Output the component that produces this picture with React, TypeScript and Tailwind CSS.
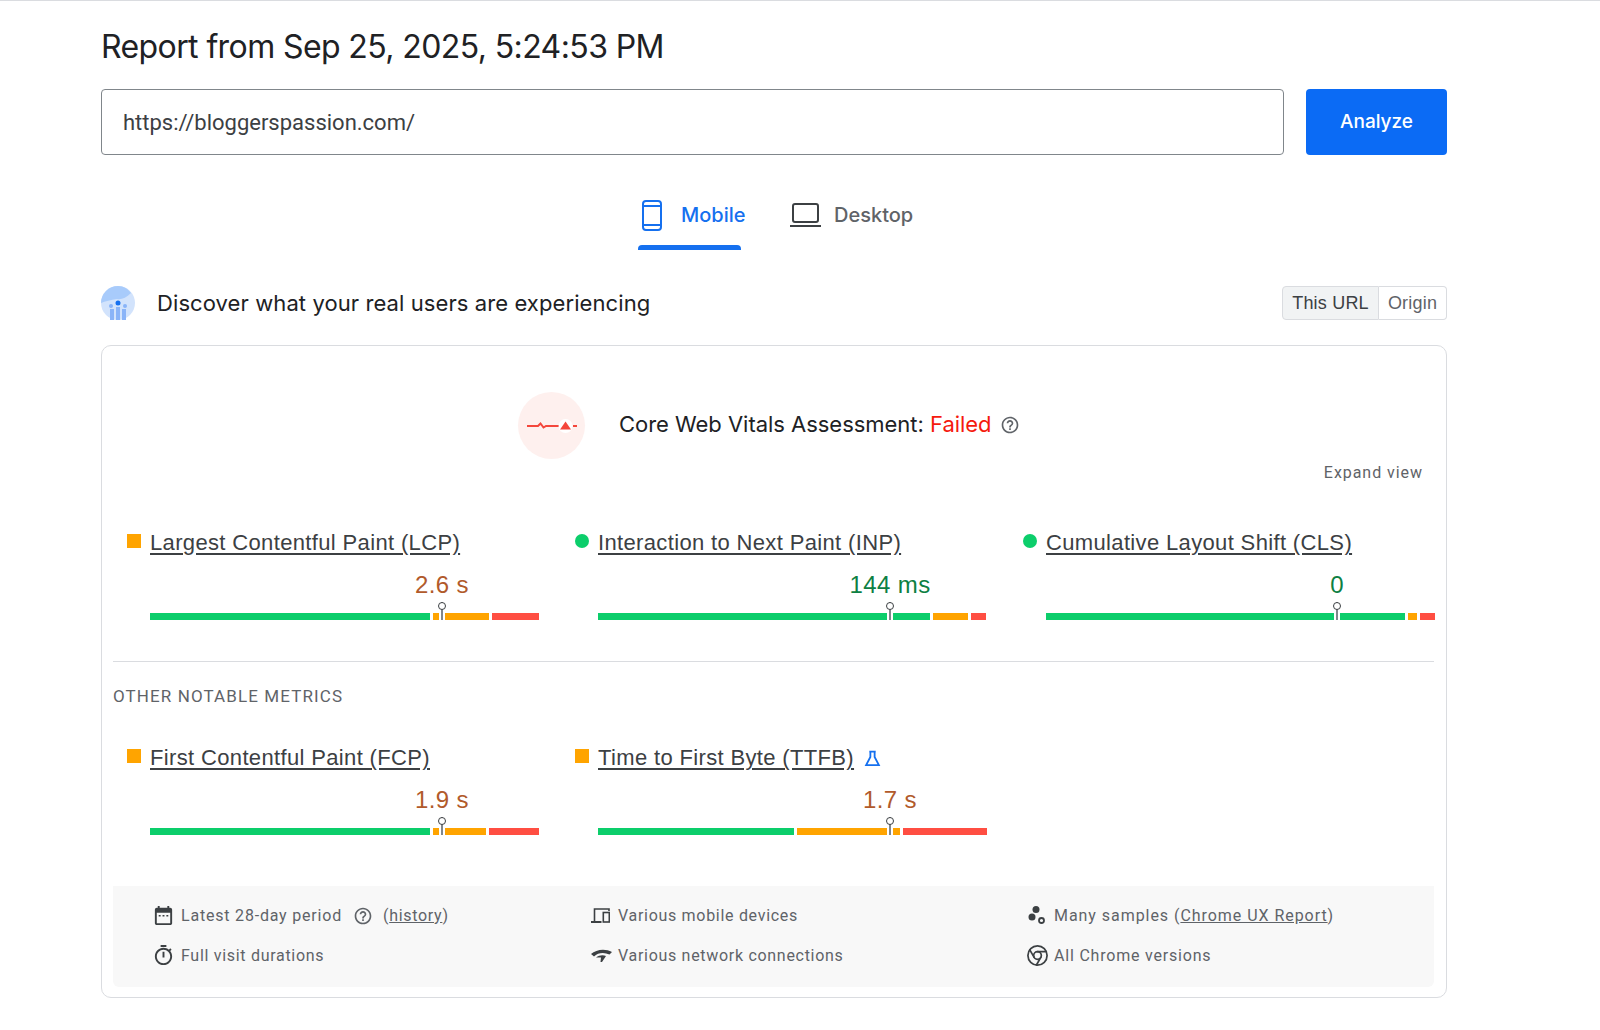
import React from 'react';
import { Chrome } from 'lucide-react';

type Segment = { color: string; width: number };

interface MetricData {
  label: string;
  value: string;
  valueClass: string;
  status: 'average' | 'good';
  marker: number;
  segments: Segment[];
  lab?: boolean;
}

const GREEN = '#0cce6b';
const ORANGE = '#ffa400';
const RED = '#ff4e42';

const coreMetrics: MetricData[] = [
  {
    label: 'Largest Contentful Paint (LCP)',
    value: '2.6 s',
    valueClass: 'text-[#b15a2b]',
    status: 'average',
    marker: 292,
    segments: [
      { color: GREEN, width: 280 },
      { color: ORANGE, width: 56 },
      { color: RED, width: 47 },
    ],
  },
  {
    label: 'Interaction to Next Paint (INP)',
    value: '144 ms',
    valueClass: 'text-[#0d8043]',
    status: 'good',
    marker: 292,
    segments: [
      { color: GREEN, width: 332 },
      { color: ORANGE, width: 35 },
      { color: RED, width: 15 },
    ],
  },
  {
    label: 'Cumulative Layout Shift (CLS)',
    value: '0',
    valueClass: 'text-[#0d8043]',
    status: 'good',
    marker: 291,
    segments: [
      { color: GREEN, width: 360 },
      { color: ORANGE, width: 9 },
      { color: RED, width: 15 },
    ],
  },
];

const otherMetrics: MetricData[] = [
  {
    label: 'First Contentful Paint (FCP)',
    value: '1.9 s',
    valueClass: 'text-[#b15a2b]',
    status: 'average',
    marker: 292,
    segments: [
      { color: GREEN, width: 280 },
      { color: ORANGE, width: 53 },
      { color: RED, width: 50 },
    ],
  },
  {
    label: 'Time to First Byte (TTFB)',
    value: '1.7 s',
    valueClass: 'text-[#b15a2b]',
    status: 'average',
    marker: 292,
    lab: true,
    segments: [
      { color: GREEN, width: 196 },
      { color: ORANGE, width: 103 },
      { color: RED, width: 84 },
    ],
  },
];

function HelpIcon({ className }: { className: string }) {
  return (
    <svg viewBox="0 0 24 24" className={className} fill="currentColor">
      <path d="M11 18h2v-2h-2v2zm1-16C6.48 2 2 6.48 2 12s4.48 10 10 10 10-4.48 10-10S17.52 2 12 2zm0 18c-4.41 0-8-3.59-8-8s3.59-8 8-8 8 3.59 8 8-3.59 8-8 8zm0-14c-2.21 0-4 1.79-4 4h2c0-1.1.9-2 2-2s2 .9 2 2c0 2-3 1.75-3 5h2c0-2.25 3-2.5 3-5 0-2.21-1.79-4-4-4z" />
    </svg>
  );
}

function Metric({ metric }: { metric: MetricData }) {
  return (
    <div className="w-[448px] shrink-0 pl-[14px]">
      <div className="flex h-[24px] items-center">
        {metric.status === 'average' ? (
          <span className="h-[14px] w-[14px] -translate-y-[2px] bg-[#ffa400]" />
        ) : (
          <span className="h-[14px] w-[14px] -translate-y-[2px] rounded-full bg-[#0cce6b]" />
        )}
        <a className="ml-[9px] font-['Liberation_Sans',sans-serif] text-[22px] leading-[24px] tracking-[0.35px] text-[#3c4043] underline underline-offset-3">
          {metric.label}
        </a>
        {metric.lab && (
          <svg viewBox="0 0 16 16" className="ml-[10px] h-[17px] w-[17px] text-[#1570ef]" fill="none" stroke="currentColor" strokeWidth="1.7">
            <path d="M5 1.500h6M6 1.500v5L2 14.200h12L10 6.500v-5" />
          </svg>
        )}
      </div>
      <div className="relative ml-[23px] mt-[16px] h-[49px] w-[389px]">
        <div
          className={`absolute top-0 -translate-x-1/2 whitespace-nowrap font-['Liberation_Sans',sans-serif] text-[24px] leading-[28px] tracking-[0.4px] ${metric.valueClass}`}
          style={{ left: metric.marker }}
        >
          {metric.value}
        </div>
        <div className="absolute bottom-0 left-0 right-0 flex h-[7px] gap-[3px]">
          {metric.segments.map((s, i) => (
            <div key={i} className="h-full" style={{ width: s.width, backgroundColor: s.color }} />
          ))}
        </div>
        <div
          className="absolute bottom-0 flex h-[18px] w-[8px] -translate-x-1/2 flex-col items-center"
          style={{ left: metric.marker }}
        >
          <span className="w-[2px] flex-1 bg-[#80868b] outline outline-2 outline-white" />
          <span className="absolute left-0 top-0 h-[8px] w-[8px] rounded-full border border-[#3c4043] bg-white" />
        </div>
      </div>
    </div>
  );
}

function InfoRow({ icon, children }: { icon: React.ReactNode; children: React.ReactNode }) {
  return (
    <div className="flex h-[40px] items-center font-['Roboto',sans-serif] text-[16px] tracking-[0.7px] text-[#5f6368]">
      <span className="flex w-[29px] -translate-y-[1px] text-[#3c4043]">{icon}</span>
      <span className="flex items-center whitespace-pre">{children}</span>
    </div>
  );
}

export default function App() {
  return (
    <div className="min-h-[1030px] border-t border-[#dadce0] bg-white px-[101px] text-[#202124]">
      <h1 className="pt-[26px] font-['Inter',sans-serif] text-[32px] leading-[40px] tracking-[-0.6px]">
        Report from Sep 25, 2025, 5:24:53 PM
      </h1>

      <div className="mt-[22px] flex w-[1346px] gap-[22px]">
        <div className="flex h-[66px] flex-1 items-center rounded border border-[#80868b] px-[21px] font-['Roboto',sans-serif] text-[22px] text-[#3c4043]">
          https://bloggerspassion.com/
        </div>
        <button className="h-[66px] w-[141px] rounded bg-[#0b6bf5] font-['Inter',sans-serif] text-[19px] font-medium text-white">
          Analyze
        </button>
      </div>

      <div className="ml-[537px] mt-[26px] flex gap-[49px]">
        <div className="flex h-[69px] w-[103px] flex-col pt-[14px]">
          <div className="flex h-[40px] items-center gap-[19px] whitespace-nowrap pl-[4px] font-['Inter',sans-serif] text-[20px] font-medium text-[#1570ef]">
            <svg viewBox="0 0 20 31" className="h-[31px] w-[20px] shrink-0" fill="none" stroke="currentColor" strokeWidth="2">
              <rect x="1" y="1" width="18" height="29" rx="3" />
              <path d="M1 6h18M1 25h18" />
            </svg>
            Mobile
          </div>
          <span className="mt-auto h-[5px] w-full rounded-t-[4px] bg-[#1570ef]" />
        </div>
        <div className="flex h-[69px] flex-col pt-[14px]">
          <div className="flex h-[40px] items-center gap-[13px] font-['Inter',sans-serif] text-[20px] font-medium text-[#5f6368]">
            <svg viewBox="0 0 31 24" className="h-[24px] w-[31px] text-[#3c4043]" fill="none" stroke="currentColor" strokeWidth="2">
              <rect x="3" y="1" width="25" height="18" rx="2" />
              <path d="M0 23h31" />
            </svg>
            Desktop
          </div>
        </div>
      </div>

      <div className="mt-[36px] flex h-[34px] w-[1346px] items-center">
        <svg viewBox="0 0 34 34" className="h-[34px] w-[34px]">
          <circle cx="17" cy="17" r="17" fill="#d2e3fc" />
          <path d="M0 17a17 17 0 0 1 17-17c6 0 10 3 13 7-5 5-10 7-14 6-6 1-12 2-16 4z" fill="#a8cbfb" />
          <rect x="9" y="23" width="4" height="11" fill="#8ab4f8" />
          <rect x="15" y="21" width="4" height="13" fill="#8ab4f8" />
          <rect x="21" y="23" width="4" height="11" fill="#8ab4f8" />
          <circle cx="17" cy="17" r="2.500" fill="#1570ef" />
          <circle cx="10" cy="20" r="2" fill="#8ab4f8" />
          <circle cx="24" cy="20" r="2" fill="#8ab4f8" />
        </svg>
        <span className="ml-[22px] font-['Inter',sans-serif] text-[22px] tracking-[0.09px] text-[#202124]">
          Discover what your real users are experiencing
        </span>
        <div className="ml-auto flex h-[34px] font-['Liberation_Sans',sans-serif] text-[18px] tracking-[0.2px]">
          <span className="flex w-[97px] items-center justify-center rounded-l-sm border border-[#dadce0] bg-[#f1f3f4] text-[#3c4043]">
            This URL
          </span>
          <span className="flex w-[68px] items-center justify-center rounded-r-sm border border-l-0 border-[#dadce0] text-[#5f6368]">
            Origin
          </span>
        </div>
      </div>

      <section className="mt-[25px] h-[653px] w-[1346px] rounded-[10px] border border-[#dadce0] pl-[11px] pr-[12px] pt-[46px]">
        <div className="flex h-[67px] items-center pl-[405px]">
          <div className="flex h-[67px] w-[67px] items-center justify-center rounded-full bg-[#fef0ee]">
            <svg viewBox="0 0 50 14" className="h-[14px] w-[50px]">
              <path d="M0 7h11l2.500-2.500 3 4 2.500-1.500h13" fill="none" stroke="#f4473c" strokeWidth="2" />
              <circle cx="38.500" cy="7" r="7" fill="#ffffff" />
              <path d="M38.500 2.500l5.500 8h-11z" fill="#f4473c" />
              <path d="M46 7h4" stroke="#f4473c" strokeWidth="2" />
            </svg>
          </div>
          <span className="ml-[34px] -translate-y-[1px] font-['Inter',sans-serif] text-[22px] tracking-[-0.03px] text-[#202124]">
            Core Web Vitals Assessment: <span className="text-[#f51a0e]">Failed</span>
          </span>
          <HelpIcon className="ml-[8px] h-[20px] w-[20px] -translate-y-[1px] text-[#5f6368]" />
        </div>

        <div className="mt-[2px] pr-[11px] text-right font-['Roboto',sans-serif] text-[16px] leading-[24px] tracking-[0.95px] text-[#5f6368]">
          Expand view
        </div>

        <div className="mt-[46px] flex">
          {coreMetrics.map((m) => (
            <Metric key={m.label} metric={m} />
          ))}
        </div>

        <div className="mt-[41px] border-t border-[#dadce0] pt-[22px] font-['Roboto',sans-serif] text-[17px] leading-[24px] tracking-[1.1px] text-[#5f6368]">
          OTHER NOTABLE METRICS
        </div>

        <div className="mt-[38px] flex">
          {otherMetrics.map((m) => (
            <Metric key={m.label} metric={m} />
          ))}
        </div>

        <div className="mt-[51px] grid h-[101px] grid-cols-[437px_436px_1fr] rounded-b-[6px] bg-[#f8f8f8] pl-[39px] pt-[10px]">
          <div>
            <InfoRow
              icon={
                <svg viewBox="0 0 24 24" className="h-[23px] w-[23px]" fill="currentColor">
                  <path d="M19 4h-1V2h-2v2H8V2H6v2H5C3.900 4 3 4.900 3 6v14c0 1.100.9 2 2 2h14c1.100 0 2-.900 2-2V6c0-1.100-.9-2-2-2zm0 16H5V9h14v11zM7 11.500h2V13H7zm4 0h2V13h-2zm4 0h2V13h-2z" />
                </svg>
              }
            >
              <span className="tracking-[0.8px]">Latest 28-day period</span>
              <HelpIcon className="ml-[11px] h-[20px] w-[20px]" />
              <span className="ml-[10px]">
                (<span className="underline">history</span>)
              </span>
            </InfoRow>
            <InfoRow
              icon={
                <svg viewBox="0 0 24 24" className="h-[23px] w-[23px]" fill="currentColor">
                  <path d="M15 1H9v2h6V1zm-4 13h2V8h-2v6zm8.030-6.610l1.420-1.420c-.43-.51-.9-.99-1.410-1.410l-1.420 1.420C16.070 4.740 14.120 4 12 4c-4.970 0-9 4.030-9 9s4.020 9 9 9 9-4.030 9-9c0-2.120-.74-4.070-1.970-5.610zM12 20c-3.870 0-7-3.130-7-7s3.130-7 7-7 7 3.130 7 7-3.130 7-7 7z" />
                </svg>
              }
            >
              Full visit durations
            </InfoRow>
          </div>
          <div>
            <InfoRow
              icon={
                <svg viewBox="0 0 19 15" className="ml-[2px] h-[15px] w-[19px]" fill="none" stroke="currentColor" strokeWidth="1.600">
                  <path d="M18 3V1H3.500v13" />
                  <path d="M0 14h10.500" strokeWidth="2" />
                  <rect x="12.300" y="4.500" width="6" height="9.500" />
                </svg>
              }
            >
              Various mobile devices
            </InfoRow>
            <InfoRow
              icon={
                <svg viewBox="0 0 21 13" className="ml-[2px] h-[13px] w-[21px]" fill="currentColor">
                  <path d="M0 5C5 .5 14-1 21 3l-2.500 2.500C13 3 7 3.500 3 7.500z" />
                  <path d="M5 8.500c3-2.500 7-3 10-1.500L11 13H9.500L10 8.500z" />
                </svg>
              }
            >
              Various network connections
            </InfoRow>
          </div>
          <div>
            <InfoRow
              icon={
                <svg viewBox="0 0 18 18" className="ml-[3px] h-[18px] w-[18px]" fill="currentColor">
                  <circle cx="8" cy="3.500" r="3.500" />
                  <circle cx="4" cy="11" r="3.500" />
                  <circle cx="13.500" cy="14.500" r="2.500" fill="none" stroke="currentColor" strokeWidth="1.800" />
                </svg>
              }
            >
              <span className="tracking-[0.95px]">
                Many samples (<span className="underline">Chrome UX Report</span>)
              </span>
            </InfoRow>
            <InfoRow icon={<Chrome className="ml-[1px] h-[23px] w-[23px]" strokeWidth={1.8} />}>
              <span className="tracking-[0.8px]">All Chrome versions</span>
            </InfoRow>
          </div>
        </div>
      </section>
    </div>
  );
}
